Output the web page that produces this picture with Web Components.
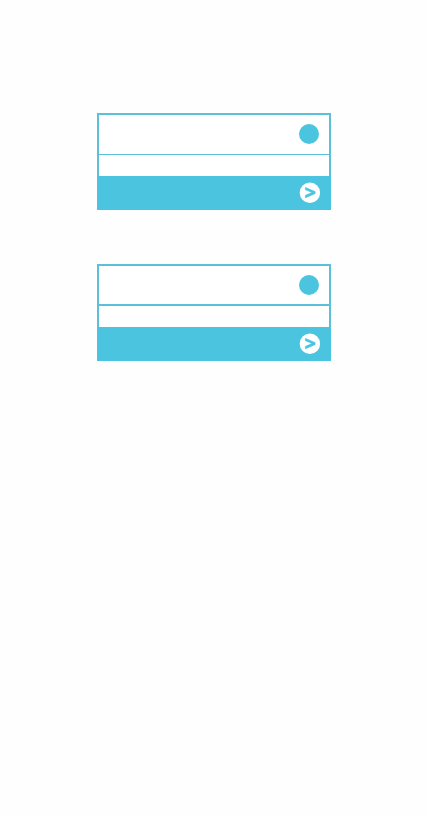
<!DOCTYPE html>
<html lang="en">
<head>
<meta charset="utf-8">
<title>Cards</title>
<style>
* {
  box-sizing: border-box;
}

body {
  margin: 0;
  background-color: #fefefe;
  font-family: "Liberation Sans", Arial, sans-serif;
}
</style>
</head>
<body>

<card-list>
  <panel-card></panel-card>
  <panel-card style="--divider: 2px"></panel-card>
</card-list>

<script>
class StatusDot extends HTMLElement {

    constructor() {
        super();
        this.attachShadow({mode: "open"}).innerHTML = `
        <style>
:host {
  display: block;
  width: 20px;
  height: 20px;
  border-radius: 50%;
  background-color: #4bc4e0;
}
        </style>
        `;
    }
}

customElements.define("status-dot", StatusDot);


class NextButton extends HTMLElement {

    constructor() {
        super();
        this.attachShadow({mode: "open"}).innerHTML = `
        <style>
:host {
  display: block;
}

button {
  display: block;
  padding: 0;
  border: 0;
  background: none;
  cursor: pointer;
}

svg {
  display: block;
  overflow: visible;
}
        </style>

        <button type="button" aria-label="Next">
            <svg width="20" height="20" viewBox="0 0 20 20" aria-hidden="true">
                <circle cx="9.9" cy="9.7" r="10.2" fill="#fff"/>
                <path d="M5.3 4.2L15.2 8.6V10.7L5.3 15V12.3L11.8 9.6L5.3 6.8Z" fill="#4bc4e0" stroke="#4bc4e0" stroke-width=".4"/>
            </svg>
        </button>
        `;
    }
}

customElements.define("next-button", NextButton);


class PanelCard extends HTMLElement {

    constructor() {
        super();
        this.attachShadow({mode: "open"}).innerHTML = `
        <style>
* {
  box-sizing: border-box;
}

:host {
  display: block;
  box-sizing: border-box;
  border: 2px solid #5bc0d9;
  background-color: #fff;
}

header, footer {
  display: flex;
  justify-content: flex-end;
}

/* the divider is part of the 40px header */
header {
  height: 40px;
  padding: 9px 10px 0;
  border-bottom: var(--divider, 1px) solid #5bc0d9;
}

.body {
  min-height: 21px;
}

footer {
  align-items: center;
  height: 34px;
  margin: 0 -2px -2px;
  padding: 0 11px;
  background-color: #4bc4e0;
}
        </style>

        <header>
            <slot name="title"></slot>
            <status-dot></status-dot>
        </header>
        <div class="body"><slot></slot></div>
        <footer>
            <slot name="footer"></slot>
            <next-button></next-button>
        </footer>
        `;
    }
}

customElements.define("panel-card", PanelCard);


class CardList extends HTMLElement {

    constructor() {
        super();
        this.attachShadow({mode: "open"}).innerHTML = `
        <style>
:host {
  display: flex;
  flex-direction: column;
  gap: 54px;
  padding: 113px 96px 54px 97px;
}
        </style>

        <slot></slot>
        `;
    }
}

customElements.define("card-list", CardList);
</script>
</body>
</html>
